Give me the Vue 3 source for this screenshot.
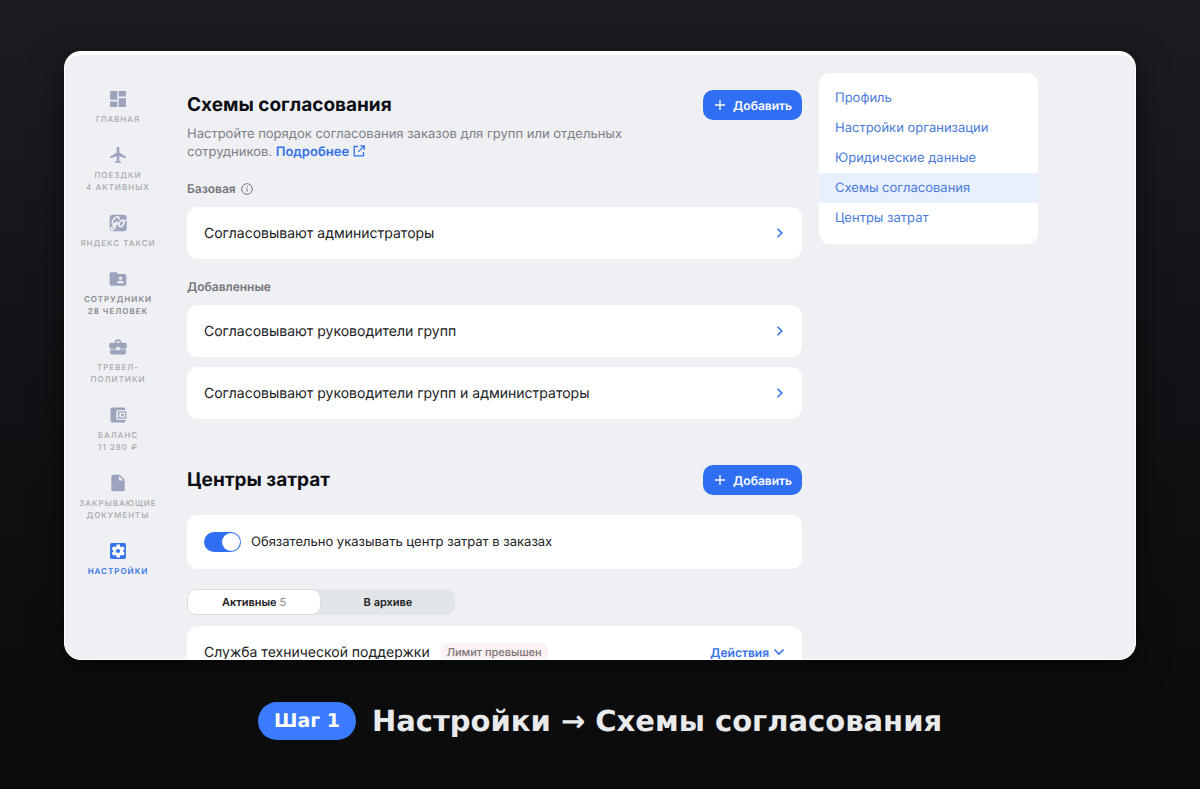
<script setup>
import { ref } from 'vue'

const nav = [
  { icon: 'home', lines: ['Главная'] },
  { icon: 'plane', lines: ['Поездки', '4 активных'] },
  { icon: 'taxi', lines: ['Яндекс Такси'] },
  { icon: 'people', lines: ['Сотрудники', '28 человек'], strong: true },
  { icon: 'case', lines: ['Тревел-', 'политики'] },
  { icon: 'wallet', lines: ['Баланс', '11 280 ₽'] },
  { icon: 'doc', lines: ['Закрывающие', 'документы'] },
  { icon: 'gear', lines: ['Настройки'], active: true }
]
const menu = ['Профиль', 'Настройки организации', 'Юридические данные', 'Схемы согласования', 'Центры затрат']
const currentMenu = ref('Схемы согласования')
const added = ['Согласовывают руководители групп', 'Согласовывают руководители групп и администраторы']
const required = ref(true)
const tab = ref('active')
</script>

<template>
  <div class="page">
    <div class="window">
      <nav class="side">
        <a v-for="n in nav" :key="n.icon" href="#" class="side-item" :class="{ active: n.active, strong: n.strong }">
          <svg class="side-icon" viewBox="0 0 24 24" fill="currentColor" fill-rule="evenodd">
            <path v-if="n.icon === 'home'" d="M2.500 2.500h8.700v10.500H2.500zM12.800 2.500h8.700V9h-8.700zM2.500 15h8.700v6.500H2.500zM12.800 11h8.700v10.500h-8.700z" />
            <path v-else-if="n.icon === 'plane'" d="M21.500 16v-2l-8-5V3.500a1.500 1.500 0 0 0-3 0V9l-8 5v2l8-2.500V19l-2 1.500V22l3.500-1 3.500 1v-1.500L13.500 19v-5.500z" />
            <template v-else-if="n.icon === 'taxi'">
              <rect x="2" y="2" width="20.500" height="20" rx="4" />
              <g fill="none" stroke="#eef0f3" stroke-width="2" stroke-linecap="round" stroke-linejoin="round">
                <path d="M13 7.500c1-2-.5-3.600-3-2.600C6.800 6.200 4.600 10 5.300 12.400c.7 1.800 3.700.6 5.400-1.900L8.500 17c-.8 2.300-3 3.500-4.300 2.700C2.800 18 5 15.500 12.500 12.500" />
                <ellipse cx="16.200" cy="12.500" rx="2.500" ry="4.200" transform="rotate(30 16.200 12.500)" />
                <path d="M17.500 9c1.200.8 2.400.6 3.800-.4" />
              </g>
            </template>
            <path v-else-if="n.icon === 'people'" d="M4 4h6l2 2h8a2 2 0 0 1 2 2v10a2 2 0 0 1-2 2H4a2 2 0 0 1-2-2V6a2 2 0 0 1 2-2zM15 9a2 2 0 1 0 0 4a2 2 0 0 0 0-4zM11 17h8v-1c0-1.330-2.670-2-4-2s-4 .670-4 2z" />
            <path v-else-if="n.icon === 'case'" d="M10 16v-1H2.500v4c0 1.110.890 2 2 2h15c1.110 0 2-.890 2-2v-4H14v1zM20.500 7H16V5l-2-2h-4L8 5v2H3.500c-1.100 0-2 .9-2 2v3c0 1.110.890 2 2 2H10v-2h4v2h6.500c1.100 0 2-.9 2-2V9c0-1.100-.9-2-2-2zM14 7h-4V5h4z" />
            <path v-else-if="n.icon === 'wallet'" d="M21 18v1a2 2 0 0 1-2 2H5a2 2 0 0 1-2-2V5a2 2 0 0 1 2-2h14a2 2 0 0 1 2 2v1h-9a2 2 0 0 0-2 2v8a2 2 0 0 0 2 2zM12 7.500h10v9H12zM13.500 9v6h7V9zM16 10.500h3v3h-3z" />
            <path v-else-if="n.icon === 'doc'" d="M6 2h8l6 6v12a2 2 0 0 1-2 2H6a2 2 0 0 1-2-2V4a2 2 0 0 1 2-2zM13 3.500V9h5.500z" />
            <template v-else>
              <rect x="2.500" y="2.500" width="19" height="19" rx="2" />
              <path fill="#fff" d="M18.250 12c0 .260-.020.520-.060.770l1.680 1.310c.150.120.190.340.090.510l-1.590 2.740a.4.4 0 0 1-.490.170l-1.970-.8c-.410.320-.860.580-1.340.780l-.290 2.100a.4.4 0 0 1-.4.340h-3.170a.4.400 0 0 1-.4-.34l-.290-2.100a5.500 5.500 0 0 1-1.340-.78l-1.970.8a.4.400 0 0 1-.490-.17l-1.590-2.740a.4.400 0 0 1 .090-.51l1.680-1.310a5.700 5.700 0 0 1 0-1.550L4.720 9.920a.4.400 0 0 1-.090-.51l1.590-2.740c.100-.17.310-.24.490-.17l1.970.8c.410-.32.860-.58 1.340-.78l.290-2.100a.4.400 0 0 1 .4-.34h3.170c.190 0 .370.150.4.340l.290 2.100c.480.200.930.460 1.340.78l1.970-.8c.180-.070.390 0 .490.170l1.590 2.740c.100.170.060.390-.090.510l-1.680 1.310c.040.250.060.510.060.770zM12 9.500a2.500 2.500 0 1 0 0 5a2.500 2.500 0 0 0 0-5z" />
            </template>
          </svg>
          <span v-for="l in n.lines" :key="l" class="side-label">{{ l }}</span>
        </a>
      </nav>

      <main class="content">
        <section>
          <div class="head">
            <h1>Схемы согласования</h1>
            <button type="button" class="add">
              <svg viewBox="0 0 10 10" width="10" height="10"><path d="M5 0v10M0 5h10" stroke="currentColor" stroke-width="1.300" /></svg>
              Добавить
            </button>
          </div>
          <p class="desc">
            Настройте порядок согласования заказов для групп или отдельных сотрудников.
            <a href="#" class="more">Подробнее<svg viewBox="0 0 12 12" width="12" height="12" fill="none" stroke="currentColor" stroke-width="1.300"><path d="M5 1.500H1.200v9.300h9.300V7M7.200.9h4v4M11 1.100L5.200 6.900" /></svg></a>
          </p>
          <h2>
            Базовая
            <svg viewBox="0 0 12 12" width="12" height="12" fill="none" stroke="currentColor"><circle cx="6" cy="6" r="5.300" /><path d="M6.100 5.300v3.200" stroke-width="1" /><circle cx="6.100" cy="3.600" r=".7" fill="currentColor" stroke="none" /></svg>
          </h2>
          <a href="#" class="card row">
            Согласовывают администраторы
            <svg class="chev" viewBox="0 0 8 12" width="8" height="12"><path d="M1.500 1.700L5.800 6L1.500 10.300" /></svg>
          </a>
          <h2>Добавленные</h2>
          <div class="stack">
            <a v-for="a in added" :key="a" href="#" class="card row">
              {{ a }}
              <svg class="chev" viewBox="0 0 8 12" width="8" height="12"><path d="M1.500 1.700L5.800 6L1.500 10.300" /></svg>
            </a>
          </div>
        </section>

        <section class="centers">
          <div class="head">
            <h1>Центры затрат</h1>
            <button type="button" class="add">
              <svg viewBox="0 0 10 10" width="10" height="10"><path d="M5 0v10M0 5h10" stroke="currentColor" stroke-width="1.300" /></svg>
              Добавить
            </button>
          </div>
          <label class="card switch">
            <input v-model="required" type="checkbox">
            Обязательно указывать центр затрат в заказах
          </label>
          <div class="tabs">
            <button type="button" :class="{ on: tab === 'active' }" @click="tab = 'active'">Активные <span>5</span></button>
            <button type="button" :class="{ on: tab === 'archive' }" @click="tab = 'archive'">В архиве</button>
          </div>
          <div class="card row">
            <div class="service">Служба технической поддержки <span class="badge">Лимит превышен</span></div>
            <button type="button" class="actions">
              Действия
              <svg class="chev" viewBox="0 0 12 8" width="12" height="8"><path d="M1.500 1.500L6 6L10.500 1.500" /></svg>
            </button>
          </div>
        </section>
      </main>

      <nav class="menu">
        <a v-for="m in menu" :key="m" href="#" :class="{ current: m === currentMenu }" @click.prevent="currentMenu = m">{{ m }}</a>
      </nav>
    </div>

    <div class="caption">
      <span class="step">Шаг 1</span>
      <span class="path">Настройки → Схемы согласования</span>
    </div>
  </div>
</template>

<style>
body {
  background: #0b0b0c;
}
</style>

<style scoped>
* {
  box-sizing: border-box;
}
.page {
  height: 100vh;
  padding: 51px 64px 49px;
  display: flex;
  flex-direction: column;
  gap: 42px;
  background: linear-gradient(#1c1d23, #111215 50%, #0b0b0c);
  font-family: Inter, "Liberation Sans", sans-serif;
  text-rendering: geometricPrecision;
  color: #202124;
}
a {
  text-decoration: none;
  color: inherit;
}
button {
  font-family: inherit;
  text-rendering: inherit;
  border: 0;
  padding: 0;
  cursor: pointer;
}
.window {
  flex: 1;
  min-height: 0;
  overflow: hidden;
  display: flex;
  align-items: flex-start;
  background: #eef0f3;
  border: 1px solid #fff;
  border-top-width: 4px;
  border-radius: 17px;
  box-shadow: 0 8px 32px #00000080;
}
.side {
  width: 106px;
  flex: none;
  padding-top: 34px;
  display: flex;
  flex-direction: column;
  gap: 20px;
  text-align: center;
  color: #a5a7ad;
}
.side-item {
  display: flex;
  flex-direction: column;
  align-items: center;
}
.side-icon {
  width: 20px;
  height: 20px;
  margin-bottom: 4px;
  color: #9ba3bd;
}
.side-label {
  font-size: 8px;
  line-height: 12px;
  font-weight: 500;
  letter-spacing: 1px;
  text-transform: uppercase;
  white-space: nowrap;
}
.strong {
  color: #85878e;
}
.active,
.active .side-icon {
  color: #3571ea;
}
.strong .side-label,
.active .side-label {
  font-weight: 600;
}
.content {
  flex: 0 1 615px;
  margin-left: 16px;
  padding-top: 35px;
}
.head {
  display: flex;
  justify-content: space-between;
  align-items: center;
}
h1 {
  margin: 0;
  font-size: 19px;
  line-height: 32px;
  font-weight: 700;
  color: #0c0e14;
}
.add {
  height: 30px;
  padding: 0 10px 0 12px;
  display: flex;
  align-items: center;
  gap: 8px;
  border-radius: 10px;
  background: #306ff3;
  color: #fff;
  font-size: 12px;
  font-weight: 600;
}
.head {
  height: 30px;
}
.desc {
  margin: 5px 0 0;
  max-width: 440px;
  font-size: 13px;
  line-height: 18px;
  color: #7d7f84;
}
.more {
  color: #3571ea;
  font-weight: 600;
}
.more svg {
  margin-left: 4px;
  vertical-align: -1px;
}
h2 {
  margin: 19px 0 9px;
  display: flex;
  align-items: center;
  gap: 5px;
  font-size: 12px;
  line-height: 18px;
  font-weight: 600;
  color: #73757a;
}
.card {
  background: #fff;
  border-radius: 11px;
}
.row {
  min-height: 52px;
  padding: 0 17px;
  display: flex;
  align-items: center;
  justify-content: space-between;
  font-size: 14px;
}
.chev {
  fill: none;
  stroke: #3571ea;
  stroke-width: 1.6;
}
.row > .chev {
  margin-right: 1px;
}
.stack {
  display: grid;
  gap: 10px;
}
.centers {
  margin-top: 46px;
}
.switch {
  min-height: 54px;
  margin-top: 20px;
  padding: 0 17px;
  display: flex;
  align-items: center;
  gap: 10px;
  font-size: 13px;
}
.switch input {
  appearance: none;
  width: 37px;
  height: 20px;
  margin: 0;
  padding: 1px;
  display: flex;
  border-radius: 10px;
  background: #b9bdc6;
}
.switch input::before {
  content: "";
  width: 18px;
  height: 18px;
  border-radius: 50%;
  background: #fff;
}
.switch input:checked {
  justify-content: flex-end;
  background: #306ff3;
}
.tabs {
  width: 268px;
  height: 26px;
  margin: 20px 0 11px;
  display: grid;
  grid-template-columns: 1fr 1fr;
  border-radius: 9px;
  background: #e2e5e8;
}
.tabs button {
  border: 1px solid transparent;
  border-radius: 9px;
  background: transparent;
  font-size: 11px;
  font-weight: 600;
  color: #202124;
}
.tabs .on {
  background: #fff;
  border-color: #d9dcdf;
}
.tabs span {
  font-weight: 400;
  color: #85878e;
}
.service {
  display: flex;
  align-items: center;
  gap: 11px;
}
.badge {
  padding: 0 6px;
  border-radius: 6px;
  background: #f9f1f2;
  font-size: 11px;
  line-height: 18px;
  font-weight: 500;
  color: #7d7576;
}
.actions {
  display: flex;
  align-items: center;
  gap: 4px;
  background: none;
  color: #3571ea;
  font-size: 12px;
  font-weight: 600;
}
.menu {
  flex: 0 0 219px;
  margin: 18px 0 0 17px;
  padding: 10px 0 11px;
  border-radius: 11px;
  background: #fff;
  font-size: 13px;
  color: #4a7bdc;
}
.menu a {
  display: block;
  padding: 0 16px;
  line-height: 30px;
}
.menu .current {
  background: #e8effd;
}
.caption {
  display: flex;
  justify-content: center;
  align-items: center;
  gap: 16px;
  font-family: "DejaVu Sans", sans-serif;
  font-weight: 700;
}
.step {
  padding: 0 16px;
  border-radius: 19px;
  background: #3b7bff;
  color: #fff;
  font-size: 19px;
  line-height: 38px;
}
.path {
  color: #e9eaec;
  font-size: 29px;
  line-height: 38px;
}
</style>
